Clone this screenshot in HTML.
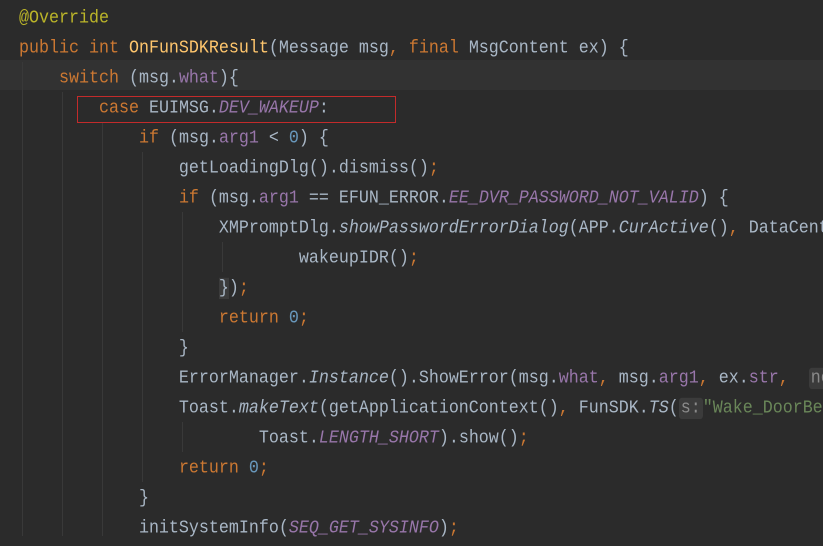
<!DOCTYPE html>
<html><head><meta charset="utf-8"><style>
html,body{margin:0;padding:0;background:#2b2b2b;width:823px;height:536px;overflow:hidden}
.l{position:absolute;left:0;width:823px;height:30px;line-height:30px;padding-top:4px;box-sizing:border-box;white-space:pre;font-family:"Liberation Mono",monospace;font-size:16.67px;color:#a9b7c6;padding-left:19px}
.l>div{transform:scaleY(1.12);transform-origin:0 50%}
.k{color:#cc7832}.a{color:#bbb529}.m{color:#ffc66d}.f{color:#9876aa}.fi{color:#9876aa;font-style:italic}.n{color:#6897bb}.s{color:#6a8759}.i{font-style:italic}
.h{background:#3b3b3b;color:#8a8a8a;border-radius:3px;padding:0 2px}
.g{position:absolute;width:1px;background:#393939}
</style></head><body>
<div style="position:absolute;left:0;top:60px;width:823px;height:30px;background:#323232"></div>
<div class="g" style="left:22px;top:62px;height:474px"></div>
<div class="g" style="left:62px;top:92px;height:444px"></div>
<div class="g" style="left:102px;top:122px;height:414px"></div>
<div class="g" style="left:142px;top:152px;height:330px"></div>
<div class="g" style="left:182px;top:212px;height:120px"></div>
<div class="g" style="left:222px;top:242px;height:30px"></div>
<div class="g" style="left:182px;top:422px;height:30px"></div>
<div class="l" style="top:0"><div><span class="a">@Override</span></div></div>
<div class="l" style="top:30px"><div><span class="k">public int </span><span class="m">OnFunSDKResult</span>(Message msg<span class="k">, final </span>MsgContent ex) {</div></div>
<div class="l" style="top:60px"><div>    <span class="k">switch </span>(msg.<span class="f">what</span>){</div></div>
<div class="l" style="top:90px"><div>        <span class="k">case </span>EUIMSG.<span class="fi">DEV_WAKEUP</span>:</div></div>
<div class="l" style="top:120px"><div>            <span class="k">if </span>(msg.<span class="f">arg1</span> &lt; <span class="n">0</span>) {</div></div>
<div class="l" style="top:150px"><div>                getLoadingDlg().dismiss()<span class="k">;</span></div></div>
<div class="l" style="top:180px"><div>                <span class="k">if </span>(msg.<span class="f">arg1</span> == EFUN_ERROR.<span class="fi">EE_DVR_PASSWORD_NOT_VALID</span>) {</div></div>
<div class="l" style="top:210px"><div>                    XMPromptDlg.<span class="i">showPasswordErrorDialog</span>(APP.<span class="i">CurActive</span>()<span class="k">, </span>DataCenter</div></div>
<div class="l" style="top:240px"><div>                            wakeupIDR()<span class="k">;</span></div></div>
<div class="l" style="top:270px"><div>                    <span style="background:#3b3b3b">}</span>)<span class="k">;</span></div></div>
<div class="l" style="top:300px"><div>                    <span class="k">return </span><span class="n">0</span><span class="k">;</span></div></div>
<div class="l" style="top:330px"><div>                }</div></div>
<div class="l" style="top:360px"><div>                ErrorManager.<span class="i">Instance</span>().ShowError(msg.<span class="f">what</span><span class="k">, </span>msg.<span class="f">arg1</span><span class="k">, </span>ex.<span class="f">str</span><span class="k">, </span> <span class="h">ne</span></div></div>
<div class="l" style="top:390px"><div>                Toast.<span class="i">makeText</span>(getApplicationContext()<span class="k">, </span>FunSDK.<span class="i">TS</span>(<span class="h">s:</span><span class="s">"Wake_DoorBell"</span></div></div>
<div class="l" style="top:420px"><div>                        Toast.<span class="fi">LENGTH_SHORT</span>).show()<span class="k">;</span></div></div>
<div class="l" style="top:450px"><div>                <span class="k">return </span><span class="n">0</span><span class="k">;</span></div></div>
<div class="l" style="top:480px"><div>            }</div></div>
<div class="l" style="top:510px"><div>            initSystemInfo(<span class="fi">SEQ_GET_SYSINFO</span>)<span class="k">;</span></div></div>
<div style="position:absolute;left:77px;top:96px;width:317px;height:25px;border:1px solid #c32b2b"></div>
</body></html>
